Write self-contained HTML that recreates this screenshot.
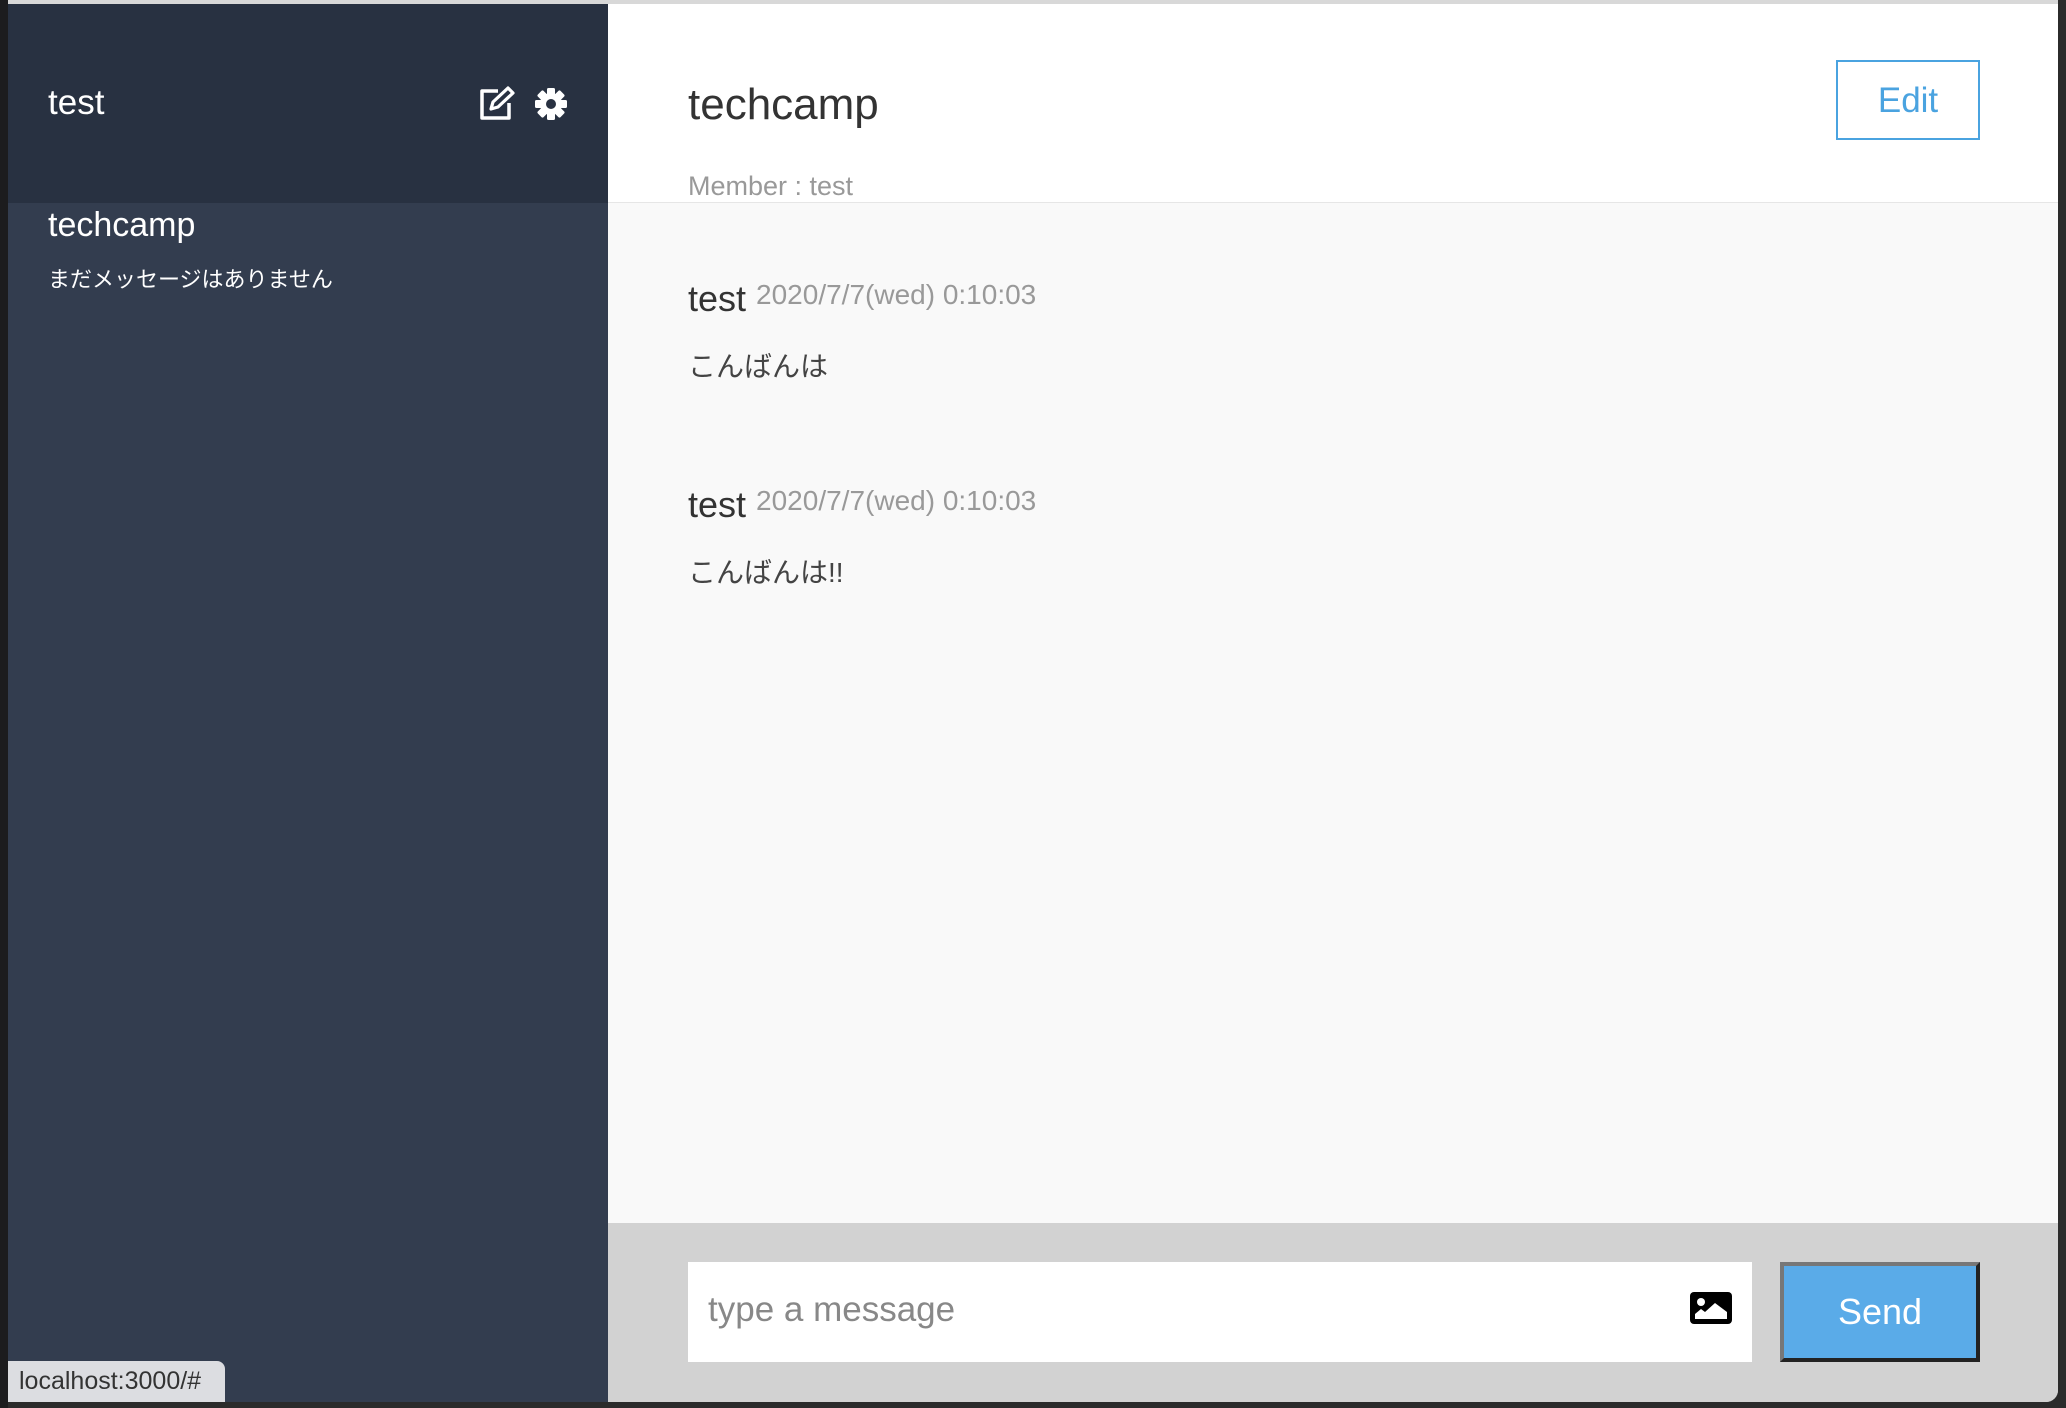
<!DOCTYPE html>
<html><head><meta charset="utf-8"><style>
*{margin:0;padding:0;box-sizing:border-box}
body{width:2066px;height:1408px;background:#2b2b2b;position:relative;overflow:hidden;font-family:"Liberation Sans","Noto Sans CJK JP",sans-serif}
.abs{position:absolute}
#left{left:0;top:0;width:8px;height:1408px;background:#1c1c1e}
#topline{left:8px;top:0;width:2050px;height:4px;background:#d8d8d8}
#side{left:8px;top:4px;width:600px;height:1398px;background:#333d4f}
#sidehead{left:8px;top:4px;width:600px;height:199px;background:#283141}
#main{left:608px;top:4px;width:1450px;height:1398px;background:#f9f9f9;border-bottom-right-radius:12px;overflow:hidden}
#mainhead{left:0;top:0;width:1450px;height:199px;background:#fff;border-bottom:1px solid #e6e6e6}
#foot{left:0;top:1219px;width:1450px;height:179px;background:#d2d2d2}
.w{color:#fff}
</style></head><body>
<div id="left" class="abs"></div>
<div id="topline" class="abs"></div>
<div id="side" class="abs"></div>
<div id="sidehead" class="abs"></div>
<div class="abs w" style="left:48px;top:83px;font-size:35px">test</div>
<svg class="abs" style="left:478px;top:86px" width="38" height="36" viewBox="0 0 38 36"><path d="M20 5H4v27h27V17" fill="none" stroke="#fff" stroke-width="3.5" stroke-linejoin="round"/><path d="M13 23l2-7L30 2l5 5-15 14z" fill="none" stroke="#fff" stroke-width="3.2" stroke-linejoin="round"/></svg>
<svg class="abs" style="left:535px;top:88px" width="32" height="32" viewBox="-16 -16 32 32"><g fill="#fff"><circle r="11"/><rect x="-4" y="-16" width="8" height="32" rx="1.5"/><rect x="-4" y="-16" width="8" height="32" rx="1.5" transform="rotate(45)"/><rect x="-4" y="-16" width="8" height="32" rx="1.5" transform="rotate(90)"/><rect x="-4" y="-16" width="8" height="32" rx="1.5" transform="rotate(135)"/></g><circle r="5" fill="#283141"/></svg>
<div class="abs w" style="left:48px;top:206px;font-size:34px">techcamp</div>
<div class="abs w" style="left:48px;top:262px;font-size:22px">まだメッセージはありません</div>
<div class="abs" style="left:8px;top:1361px;width:217px;height:41px;background:#dcdde1;border-top-right-radius:8px;color:#333;font-size:25px;padding:6px 0 0 11px">localhost:3000/#</div>
<div id="main" class="abs">
 <div id="mainhead" class="abs">
  <div class="abs" style="left:80px;top:76px;font-size:44px;color:#333">techcamp</div>
  <div class="abs" style="left:80px;top:167px;font-size:27px;color:#999">Member : test</div>
  <div class="abs" style="left:1228px;top:56px;width:144px;height:80px;border:2px solid #4aa3e0;color:#4aa3e0;font-size:35px;text-align:center;line-height:78px">Edit</div>
 </div>
 <div class="abs" style="left:80px;top:274px;font-size:36px;color:#333">test <span style="font-size:28px;color:#999;vertical-align:7px">2020/7/7(wed) 0:10:03</span></div>
 <div class="abs" style="left:80px;top:341px;font-size:28px;color:#444">こんばんは</div>
 <div class="abs" style="left:80px;top:480px;font-size:36px;color:#333">test <span style="font-size:28px;color:#999;vertical-align:7px">2020/7/7(wed) 0:10:03</span></div>
 <div class="abs" style="left:80px;top:547px;font-size:28px;color:#444">こんばんは!!</div>
 <div id="foot" class="abs">
  <div class="abs" style="left:80px;top:39px;width:1064px;height:100px;background:#fff;color:#888;font-size:35px;padding:28px 0 0 20px">type a message</div>
  <svg class="abs" style="left:1082px;top:69px" width="42" height="32" viewBox="0 0 42 32"><rect x="0" y="0" width="42" height="32" rx="4" fill="#000"/><circle cx="11" cy="10" r="4" fill="#fff"/><path d="M5 27v-5l6-5 4 3 10-9 12 9v7z" fill="#fff"/></svg>
  <div class="abs" style="left:1172px;top:39px;width:200px;height:100px;background:#5aabe8;border:4px solid;border-color:#777 #222 #222 #777;color:#fff;font-size:36px;text-align:center;line-height:92px">Send</div>
 </div>
</div>
</body></html>
